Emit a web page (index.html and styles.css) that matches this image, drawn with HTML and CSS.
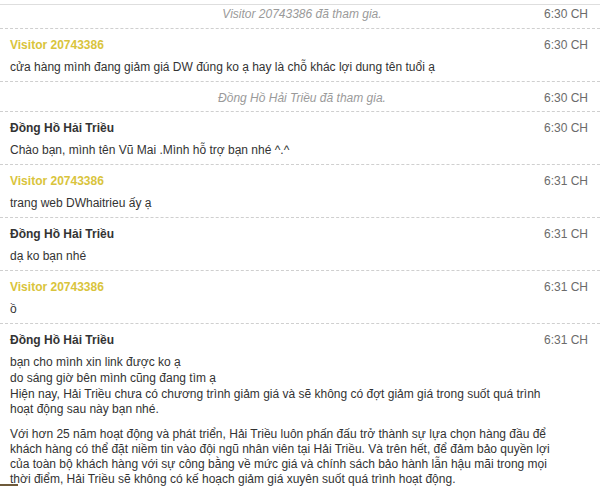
FILE: index.html
```html
<!DOCTYPE html>
<html lang="vi">
<head>
<meta charset="utf-8">
<link rel="stylesheet" href="styles.css">
</head>
<body>
<div class="chat">
  <div class="row system first">
    <span class="sys-text">Visitor 20743386 đã tham gia.</span>
    <span class="time sys-time">6:30 CH</span>
  </div>
  <div class="row">
    <div class="head"><span class="name visitor">Visitor 20743386</span><span class="time">6:30 CH</span></div>
    <div class="msg">cửa hàng mình đang giảm giá DW đúng ko ạ hay là chỗ khác lợi dung tên tuổi ạ</div>
  </div>
  <div class="row system">
    <span class="sys-text">Đồng Hồ Hải Triều đã tham gia.</span>
    <span class="time sys-time">6:30 CH</span>
  </div>
  <div class="row">
    <div class="head"><span class="name agent">Đồng Hồ Hải Triều</span><span class="time">6:30 CH</span></div>
    <div class="msg">Chào bạn, mình tên Vũ Mai .Mình hỗ trợ bạn nhé ^.^</div>
  </div>
  <div class="row">
    <div class="head"><span class="name visitor">Visitor 20743386</span><span class="time">6:31 CH</span></div>
    <div class="msg">trang web DWhaitrieu ấy ạ</div>
  </div>
  <div class="row">
    <div class="head"><span class="name agent">Đồng Hồ Hải Triều</span><span class="time">6:31 CH</span></div>
    <div class="msg">dạ ko bạn nhé</div>
  </div>
  <div class="row">
    <div class="head"><span class="name visitor">Visitor 20743386</span><span class="time">6:31 CH</span></div>
    <div class="msg">ồ</div>
  </div>
  <div class="row">
    <div class="head"><span class="name agent">Đồng Hồ Hải Triều</span><span class="time">6:31 CH</span></div>
    <div class="msg">bạn cho mình xin link được ko ạ</div>
    <div class="msg follow">do sáng giờ bên mình cũng đang tìm ạ</div>
    <div class="msg para-block">
      <p class="para">Hiện nay, Hải Triều chưa có chương trình giảm giá và sẽ không có đợt giảm giá trong suốt quá trình hoạt động sau này bạn nhé.</p>
      <p class="para">Với hơn 25 năm hoạt động và phát triển, Hải Triều luôn phấn đấu trở thành sự lựa chọn hàng đầu để khách hàng có thể đặt niềm tin vào đội ngũ nhân viên tại Hải Triều. Và trên hết, để đảm bảo quyền lợi của toàn bộ khách hàng với sự công bằng về mức giá và chính sách bảo hành lẫn hậu mãi trong mọi thời điểm, Hải Triều sẽ không có kế hoạch giảm giá xuyên suốt quá trình hoạt động.</p>
    </div>
  </div>
</div>
<div class="corner"></div>
</body>
</html>
```

FILE: styles.css
```css
html, body {
  margin: 0;
  padding: 0;
  background: #fff;
  height: 486px;
  overflow: hidden;
}
body {
  font-family: "Liberation Sans", Arial, sans-serif;
  font-size: 12px;
  line-height: 16px;
  color: #333;
  position: relative;
}
.chat {
  margin-top: 4px;
  border-top: 1px solid #dedede;
}
.row {
  padding: 8px 12px 6px 10px;
  border-bottom: 1px dashed #cfcfcf;
}
.row.system {
  display: flex;
  justify-content: space-between;
  padding-bottom: 5px;
}
.row.first {
  padding-top: 1px;
  padding-bottom: 6px;
}
.sys-text {
  flex: 1;
  text-align: center;
  font-style: italic;
  color: #9a9a9a;
  padding-left: 50px;
}
.head {
  display: flex;
  justify-content: space-between;
}
.name {
  font-weight: bold;
}
.visitor {
  color: #d9c43c;
}
.agent {
  color: #333;
}
.time {
  color: #6b6b6b;
  white-space: nowrap;
}
.msg {
  margin-top: 6px;
  margin-right: 28px;
  color: #333;
}
.msg.follow {
  margin-top: 0;
}
.msg.para-block {
  margin-top: 1px;
  line-height: 15px;
}
.para {
  margin: 0 0 10px;
}
.corner {
  position: absolute;
  left: 0;
  bottom: 0;
  width: 18px;
  height: 2px;
  background: #6e5a3a;
}
```
